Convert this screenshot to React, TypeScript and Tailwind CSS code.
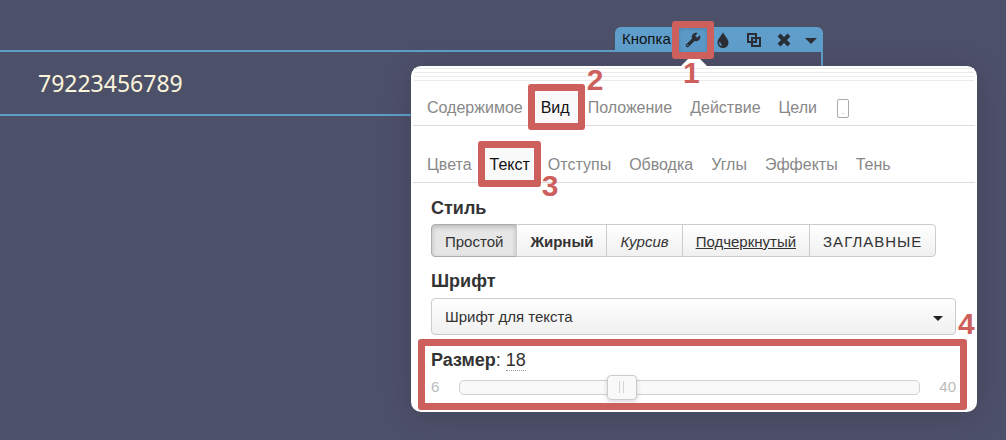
import type { ReactNode } from "react";

const mainTabs = ["Содержимое", "Вид", "Положение", "Действие", "Цели"];
const viewTabs = ["Цвета", "Текст", "Отступы", "Обводка", "Углы", "Эффекты", "Тень"];

const styles = [
  { label: "Простой", className: "rounded-l-[4px] border-[#adadad] bg-[#e6e6e6] shadow-[inset_0_2px_5px_rgba(0,0,0,0.2)]" },
  { label: "Жирный", className: "-ml-px border-[#ccc] font-bold bg-linear-to-b from-white to-[#f0f0f0]" },
  { label: "Курсив", className: "-ml-px border-[#ccc] italic bg-linear-to-b from-white to-[#f0f0f0]" },
  { label: "Подчеркнутый", className: "-ml-px border-[#ccc] underline bg-linear-to-b from-white to-[#f0f0f0]" },
  { label: "Заглавные", className: "-ml-px border-[#ccc] rounded-r-[4px] uppercase tracking-[1px] bg-linear-to-b from-white to-[#f0f0f0]" },
];

function Frame({ className }: { className: string }) {
  return <span className={`pointer-events-none absolute z-10 rounded-[3px] border-7 border-[#cd5f5d] ${className}`} />;
}

function Step({ className, children }: { className: string; children: ReactNode }) {
  return (
    <span className={`pointer-events-none absolute z-20 text-[30px] leading-[30px] font-bold text-[#cd5f5d] ${className}`}>
      {children}
    </span>
  );
}

type TabsProps = {
  items: string[];
  active: string;
  step: string;
  stepClass: string;
  frameClass: string;
  children?: ReactNode;
};

function Tabs({ items, active, step, stepClass, frameClass, children }: TabsProps) {
  return (
    <div className="mx-[2px] flex border-b border-[#dcdcdc] px-[5px] text-[16px] leading-[20px] text-[#888]">
      {items.map((item) => (
        <button key={item} type="button" className={item === active ? "relative bg-[#f9f9f9] px-[9px] pt-[8px] pb-[7px] text-[#111]" : "px-[9px] pt-[8px] pb-[7px]"}>
          {item}
          {item === active && (
            <>
              <Frame className={frameClass} />
              <Step className={stepClass}>{step}</Step>
            </>
          )}
        </button>
      ))}
      {children}
    </div>
  );
}

function Toolbar() {
  return (
    <div className="ml-auto flex h-[25px] w-[208px] items-center rounded-t-[6px] bg-[#5f9ecb] pl-[7px] text-[#2b2f35]">
      <span className="w-[57px] text-[15px] text-[#111]">Кнопка</span>
      <button type="button" aria-label="Настройки" className="relative flex h-full w-[28px] items-center justify-center bg-[#5b9ac8] shadow-[inset_0_2px_4px_rgba(0,0,0,0.15)]">
        <svg width="16" height="16" viewBox="0 0 16 16" fill="none">
          <path d="M2.500 13.500 9.500 6.500" stroke="currentColor" strokeWidth="3.400" strokeLinecap="round" />
          <circle cx="11" cy="5" r="4.300" fill="currentColor" />
          <path d="M11.200 4.800 16 0" stroke="#5b9ac8" strokeWidth="3" />
          <circle cx="2.800" cy="13.200" r="0.700" fill="#5b9ac8" />
        </svg>
        <Frame className="-inset-x-[7px] -top-[6px] -bottom-[7px]" />
        <Step className="left-[4px] top-[31px]">1</Step>
      </button>
      <button type="button" aria-label="Цвет" className="flex w-[32px] justify-center">
        <svg width="12" height="16" viewBox="0 0 12 16">
          <path d="M6 0C5.400 3 0.500 6.500 0.500 10.500a5.500 5.500 0 0 0 11 0C11.500 6.500 6.600 3 6 0Z" fill="currentColor" />
          <path d="M3 10c-.6 1.600.2 3 1.800 3.200" fill="none" stroke="#5f9ecb" strokeWidth="1.200" />
        </svg>
      </button>
      <button type="button" aria-label="Копировать" className="flex w-[30px] justify-center">
        <svg width="14" height="14" viewBox="0 0 14 14" fill="none" stroke="currentColor" strokeWidth="2">
          <path d="M1 1h8v8H1z" />
          <path d="M5 5h8v8H5z" />
        </svg>
      </button>
      <button type="button" aria-label="Удалить" className="flex w-[29px] justify-center">
        <svg width="14" height="14" viewBox="0 0 14 14" stroke="currentColor" strokeWidth="4">
          <path d="M2 2l10 10M12 2L2 12" />
        </svg>
      </button>
      <button type="button" aria-label="Ещё" className="flex w-[25px] justify-center pt-[2px]">
        <svg width="12" height="6" viewBox="0 0 12 6">
          <path d="M0 0h12L6 6Z" fill="currentColor" />
        </svg>
      </button>
    </div>
  );
}

function Settings() {
  return (
    <div className="absolute top-[66px] right-[29px] w-[566px] rounded-[10px] bg-white pb-[2px] shadow-[0_4px_30px_rgba(0,0,0,0.15)]">
      <span className="absolute -top-[13px] left-[270px] border-x-13 border-b-13 border-x-transparent border-b-white" />
      <div className="mx-[3px] h-[15px] bg-[repeating-linear-gradient(to_bottom,transparent_0_2px,#ebebeb_2px_3px,transparent_3px_4px)]" />

      <div className="pt-[9px]">
        <Tabs
          items={mainTabs}
          active="Вид"
          step="2"
          frameClass="-right-[6px] -left-[4px] -top-[6px] -bottom-[5px]"
          stepClass="left-full top-[-25px] ml-[8px]"
        >
          <button type="button" aria-label="Мобильная версия" className="px-[11px] pt-px">
            <svg width="12" height="19" viewBox="0 0 12 19" fill="none" stroke="#aaa">
              <rect x="0.500" y="0.500" width="11" height="18" rx="1.500" />
              <path d="M5.500 14.500h1" />
            </svg>
          </button>
        </Tabs>
      </div>
      <div className="pt-[21px]">
        <Tabs
          items={viewTabs}
          active="Текст"
          step="3"
          frameClass="-right-[2px] -left-[3px] -top-[6px] -bottom-[5px]"
          stepClass="left-full top-[24px] ml-[3px]"
        />
      </div>

      <div className="px-[20px] pt-[15px] text-[#333]">
        <h2 className="text-[18px] leading-[20px] font-bold">Стиль</h2>
        <div className="mt-[6px] flex text-[15px] leading-[17px]">
          {styles.map(({ label, className }) => (
            <button key={label} type="button" className={`border px-[13px] pt-[8px] pb-[6px] ${className}`}>
              {label}
            </button>
          ))}
        </div>

        <label htmlFor="font" className="mt-[14px] block text-[18px] leading-[20px] font-bold">Шрифт</label>
        <div className="relative mt-[7px] mr-px">
          <select id="font" className="block h-[37px] w-full appearance-none rounded-[4px] border border-[#ccc] bg-linear-to-b from-white to-[#f0f0f0] px-[13px] pt-[2px] text-[15px]">
            <option>Шрифт для текста</option>
          </select>
          <svg width="10" height="5" viewBox="0 0 10 5" className="pointer-events-none absolute top-[18px] right-[13px]">
            <path d="M0 0h10L5 5Z" fill="#222" />
          </svg>
          <Step className="bottom-[-4px] left-full ml-[2px]">4</Step>
        </div>

        <div className="relative mt-[4px] -mx-[13px] px-[13px] pt-[11px] pb-[10px]">
          <Frame className="left-0 right-[3px] inset-y-0" />
          <div className="text-[18px] leading-[20px]">
            <label htmlFor="size" className="font-bold">Размер</label>: <span className="border-b border-dotted border-[#999]">18</span>
          </div>
          <div className="mt-[4px] flex h-[26px] items-center text-[15px] text-[#bbb]">
            <span className="w-[28px]">6</span>
            <div className="relative h-[15px] flex-1 rounded-[5px] border border-[#d0d0d0] bg-[#f9f9f9]">
              <input
                id="size"
                type="range"
                min={6}
                max={40}
                defaultValue={18}
                className="absolute -top-[6px] -left-[16px] h-[25px] w-[calc(100%+32px)] appearance-none bg-transparent [&::-webkit-slider-thumb]:h-[25px] [&::-webkit-slider-thumb]:w-[30px] [&::-webkit-slider-thumb]:appearance-none [&::-webkit-slider-thumb]:rounded-[4px] [&::-webkit-slider-thumb]:border [&::-webkit-slider-thumb]:border-[#ccc] [&::-webkit-slider-thumb]:bg-[linear-gradient(to_right,#d5d5d5_1px,#f9f9f9_1px_4px,#d5d5d5_4px)] [&::-webkit-slider-thumb]:bg-[length:5px_12px] [&::-webkit-slider-thumb]:bg-center [&::-webkit-slider-thumb]:bg-no-repeat [&::-webkit-slider-thumb]:bg-[#f9f9f9] [&::-webkit-slider-thumb]:shadow-[0_2px_5px_rgba(0,0,0,0.15)]"
              />
            </div>
            <span className="mr-px w-[36px] text-right">40</span>
          </div>
        </div>
      </div>
    </div>
  );
}

export default function App() {
  return (
    <main className="relative min-h-screen bg-[#4d5069] pt-[27px] font-['Liberation_Sans',sans-serif]">
      <div className="mr-[183px]">
        <Toolbar />
        <div className="-mt-[2px] border-y-2 border-r-2 border-[#5f9ecb] px-[38px] py-[15px]">
          <p className="font-['Noto_Sans',sans-serif] text-[23px] leading-[32px] text-[#fbf5dc]">79223456789</p>
        </div>
      </div>
      <Settings />
    </main>
  );
}
